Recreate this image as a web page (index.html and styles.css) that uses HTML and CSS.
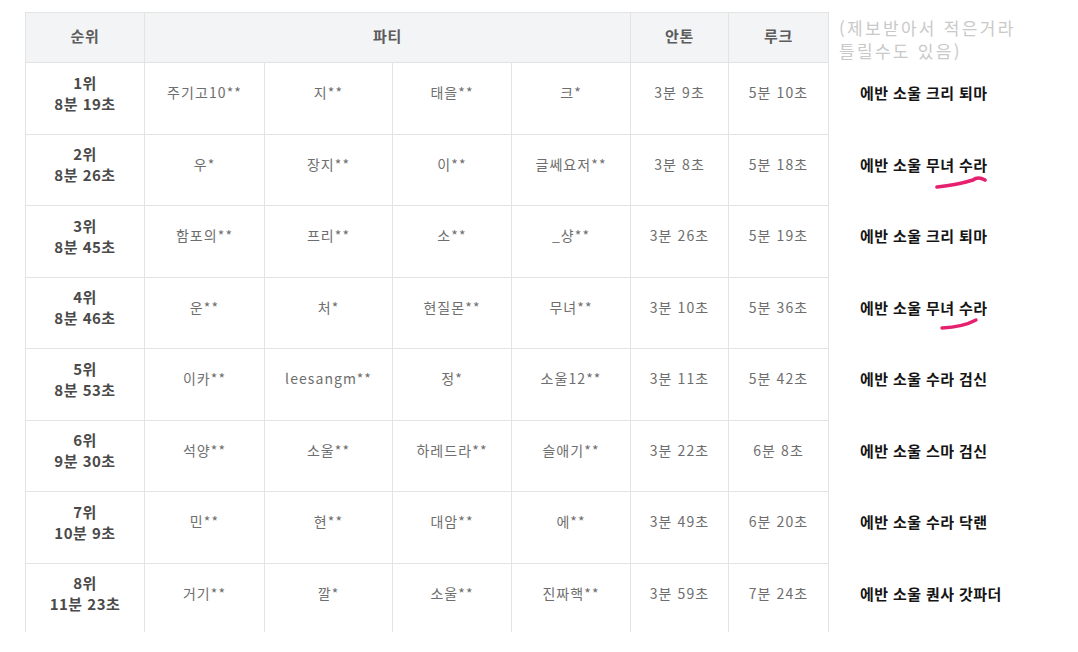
FILE: index.html
```html
<!DOCTYPE html>
<html lang="ko">
<head>
<meta charset="utf-8">
<title>순위표</title>
<link rel="stylesheet" href="styles.css">
</head>
<body>
<div class="page">
  <div class="clip">
    <table class="rank">
      <colgroup>
        <col class="c-rank">
        <col class="c-p1">
        <col class="c-p2">
        <col class="c-p3">
        <col class="c-p4">
        <col class="c-anton">
        <col class="c-luke">
        <col class="c-memo">
      </colgroup>
      <thead>
        <tr>
          <th class="hd">순위</th>
          <th class="hd" colspan="4">파티</th>
          <th class="hd">안톤</th>
          <th class="hd">루크</th>
          <th class="note"><span class="note-line">(제보받아서 적은거라</span><span class="note-line">틀릴수도 있음)</span></th>
        </tr>
      </thead>
      <tbody>
        <tr>
          <td class="rk">1위<br>8분 19초</td>
          <td>주기고10**</td><td>지**</td><td>태을**</td><td>크*</td>
          <td>3분 9초</td><td>5분 10초</td>
          <td class="memo">에반 소울 크리 퇴마</td>
        </tr>
        <tr>
          <td class="rk">2위<br>8분 26초</td>
          <td>우*</td><td>장지**</td><td>이**</td><td>글쎄요저**</td>
          <td>3분 8초</td><td>5분 18초</td>
          <td class="memo">에반 소울 무녀 수라<svg class="scribble s1" width="60" height="18" viewBox="0 0 60 18"><path d="M4 13 Q 24 11 40 6 Q 45 2 52 6" fill="none" stroke="#e5206e" stroke-width="3.6" stroke-linecap="round" stroke-linejoin="round"/></svg></td>
        </tr>
        <tr>
          <td class="rk">3위<br>8분 45초</td>
          <td>함포의**</td><td>프리**</td><td>소**</td><td>_샹**</td>
          <td>3분 26초</td><td>5분 19초</td>
          <td class="memo">에반 소울 크리 퇴마</td>
        </tr>
        <tr>
          <td class="rk">4위<br>8분 46초</td>
          <td>운**</td><td>처*</td><td>현질몬**</td><td>무녀**</td>
          <td>3분 10초</td><td>5분 36초</td>
          <td class="memo">에반 소울 무녀 수라<svg class="scribble s2" width="60" height="18" viewBox="0 0 60 18"><path d="M9 13 Q 30 12 43 5" fill="none" stroke="#e5206e" stroke-width="3.4" stroke-linecap="round"/></svg></td>
        </tr>
        <tr>
          <td class="rk">5위<br>8분 53초</td>
          <td>이카**</td><td>leesangm**</td><td>정*</td><td>소울12**</td>
          <td>3분 11초</td><td>5분 42초</td>
          <td class="memo">에반 소울 수라 검신</td>
        </tr>
        <tr>
          <td class="rk">6위<br>9분 30초</td>
          <td>석양**</td><td>소울**</td><td>하레드라**</td><td>슬애기**</td>
          <td>3분 22초</td><td>6분 8초</td>
          <td class="memo">에반 소울 스마 검신</td>
        </tr>
        <tr>
          <td class="rk">7위<br>10분 9초</td>
          <td>민**</td><td>현**</td><td>대암**</td><td>에**</td>
          <td>3분 49초</td><td>6분 20초</td>
          <td class="memo">에반 소울 수라 닥랜</td>
        </tr>
        <tr>
          <td class="rk">8위<br>11분 23초</td>
          <td>거기**</td><td>깔*</td><td>소울**</td><td>진짜핵**</td>
          <td>3분 59초</td><td>7분 24초</td>
          <td class="memo">에반 소울 퀀사 갓파더</td>
        </tr>
      </tbody>
    </table>
  </div>
</div>
</body>
</html>
```

FILE: styles.css
```css
* { box-sizing: border-box; }

html, body {
  margin: 0;
  padding: 0;
  background: #ffffff;
}

body {
  font-family: "Noto Sans CJK KR", "Noto Sans", sans-serif;
  color: #666;
}

.page {
  padding: 12px 0 0 25px;
}

.clip {
  height: 620px;
  overflow: hidden;
}

.rank {
  border-collapse: collapse;
  table-layout: fixed;
  width: 1015px;
}

.c-rank { width: 119px; }
.c-p1 { width: 120px; }
.c-p2 { width: 128px; }
.c-p3 { width: 119px; }
.c-p4 { width: 119px; }
.c-anton { width: 98px; }
.c-luke { width: 100px; }
.c-memo { width: 212px; }

.rank th,
.rank td {
  border: 1px solid #e3e3e3;
  text-align: center;
  vertical-align: middle;
  padding: 0 0 11px 0;
  font-size: 14px;
  letter-spacing: 1.1px;
  line-height: 21px;
  font-weight: 400;
  color: #6e6e6e;
  white-space: nowrap;
}

.rank thead tr { height: 50px; }
.rank tbody tr { height: 71.5px; }

.rank th.hd {
  background: #f3f4f6;
  font-weight: 700;
  font-size: 15px;
  letter-spacing: 0.8px;
  color: #5c5c5c;
  padding-bottom: 5px;
}

.rank th.note {
  border: none;
  background: #fff;
  text-align: left;
  vertical-align: top;
  padding: 3px 0 0 10px;
  font-size: 17px;
  line-height: 23px;
  font-weight: 400;
  color: #c9c9c9;
  letter-spacing: 2.3px;
}

.note-line {
  display: block;
  height: 23px;
  line-height: 23px;
}

.rank td.rk {
  font-weight: 700;
  font-size: 15px;
  color: #4a4a4a;
  letter-spacing: 0.5px;
}

.rank td.memo {
  border: none;
  position: relative;
  text-align: left;
  padding-left: 31px;
  font-weight: 700;
  font-size: 15px;
  color: #151515;
  letter-spacing: 0.4px;
}

.scribble {
  position: absolute;
  left: 104px;
}

.s1 { top: 40px; }
.s2 { top: 38px; }
```
